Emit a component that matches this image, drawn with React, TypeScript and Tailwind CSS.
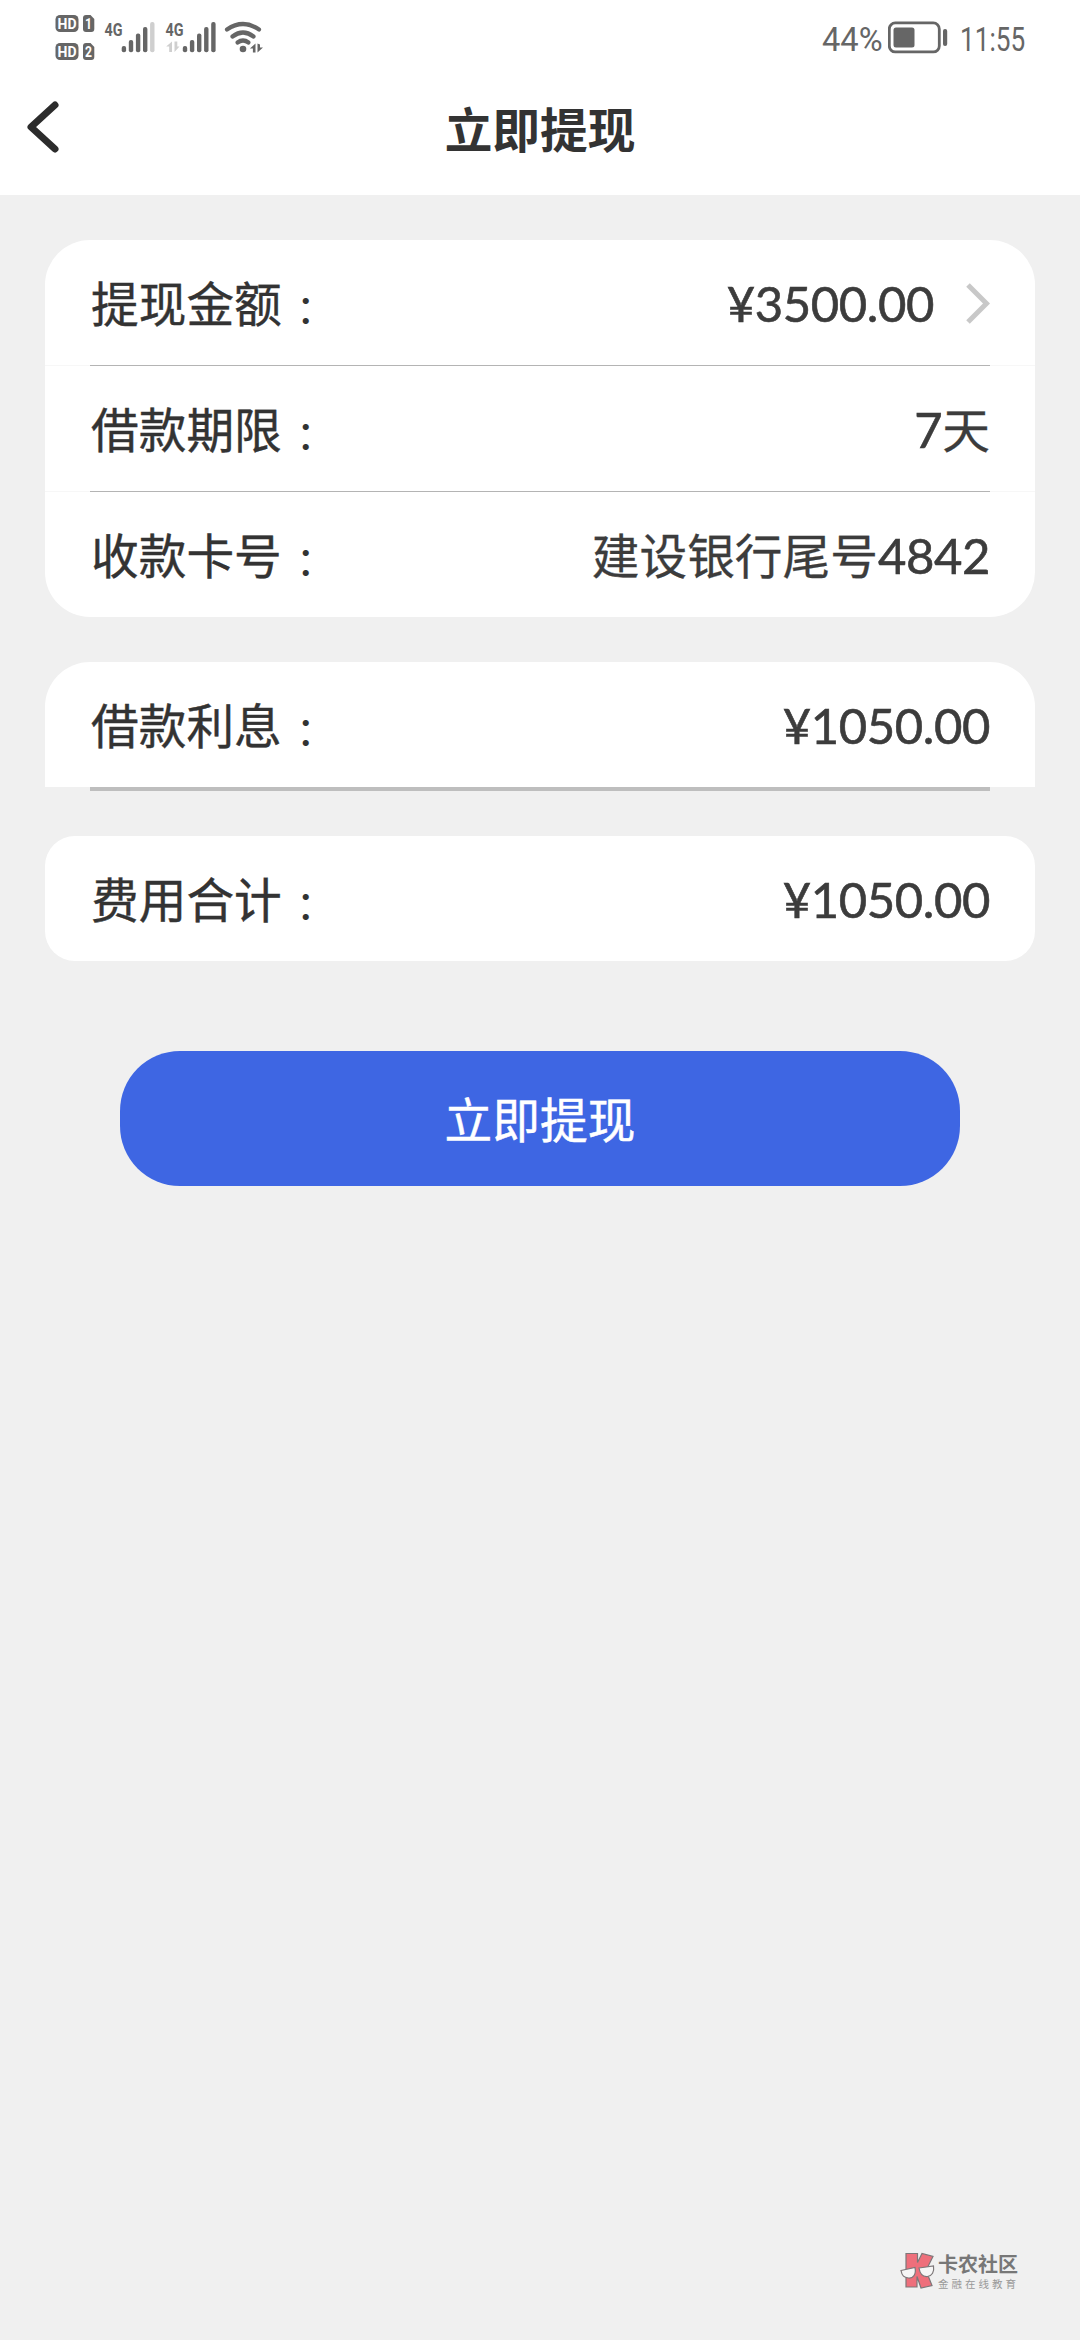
import type { ReactNode } from 'react';

interface RowProps {
  label: string;
  children: ReactNode;
}

function Row({ label, children }: RowProps) {
  return (
    <div className="flex h-[125px] items-center justify-between px-[45px] pb-0.5 text-[47.7px] leading-[70px] text-[#3c3c3c]">
      <div className="flex items-center pl-px text-[#333]">
        <span className="[-webkit-text-stroke:0.4px_#333]">{label}</span>
        <span className="mt-[14px] w-12 text-center font-['Noto_Sans_CJK_TC',sans-serif] text-[40px]">：</span>
      </div>
      <div className="flex items-center [-webkit-text-stroke:0.3px_#3c3c3c]">{children}</div>
    </div>
  );
}

function Num({ children }: { children: string }) {
  return (
    <span className="mt-[3px] font-['Lato',sans-serif] text-[49px] font-normal tracking-[-0.4px] [-webkit-text-stroke:0.6px_#3c3c3c]">
      {children}
    </span>
  );
}

function Divider() {
  return (
    <div className="h-px bg-[#f7f7f7] px-[45px]">
      <div className="h-px bg-[#b4b4b4]" />
    </div>
  );
}

function SignalBars({ x, weak }: { x: number; weak?: boolean }) {
  const tops = [46, 40, 33.5, 27, 22];
  return (
    <g>
      {tops.map((top, i) => (
        <rect
          key={top}
          x={x + i * 7.1}
          y={top}
          width={4.4}
          height={52.3 - top}
          rx={2}
          fill={weak && i === 4 ? '#cfcfcf' : '#666'}
        />
      ))}
    </g>
  );
}

function StatusBar() {
  return (
    <div className="flex h-[75px] items-start justify-between text-[#666]">
      <svg className="h-[75px] w-[280px]" viewBox="0 0 280 75" fill="#666" fontFamily="Roboto, sans-serif">
        {[15, 43].map((y, i) => (
          <g key={y}>
            <rect x="55.5" y={y} width="23" height="17" rx="4.5" />
            <text x="57.5" y={y + 13.8} fill="#fff" fontSize="15" fontWeight="700" textLength="19" lengthAdjust="spacingAndGlyphs">
              HD
            </text>
            <path d={`M86 ${y}h4.5l3.8 4v10a3 3 0 0 1-3 3h-5.300a3 3 0 0 1-3-3v-11a3 3 0 0 1 3-3z`} />
            <text x="85" y={y + 13.8} fill="#fff" fontSize="14" fontWeight="700" textLength="7" lengthAdjust="spacingAndGlyphs">
              {i + 1}
            </text>
          </g>
        ))}

        <text x="104.5" y="35.5" fontSize="19" fontWeight="700" textLength="18" lengthAdjust="spacingAndGlyphs">4G</text>
        <SignalBars x={121.7} weak />
        <text x="165.5" y="35.5" fontSize="19" fontWeight="700" textLength="18" lengthAdjust="spacingAndGlyphs">4G</text>
        <SignalBars x={182.8} />
        <path d="M172 41.5v10.5h-2.8v-5.5h-3z M174.500 41.500v10.500l5-5.500h-2.200v-5z" fill="#cfcfcf" />

        {/* wifi */}
        <g fill="none" stroke="#666" strokeWidth="4.2" strokeLinecap="round">
          <path d="M227 29.5Q243 18.5 259 29.5" />
          <path d="M232.5 36.5Q243 28.5 253.5 36.5" />
          <path d="M237.5 42.5Q243 38.5 248.5 42.5" />
        </g>
        <circle cx="243" cy="49" r="3.3" />
        <path d="M255.500 43.500v9h-2.600v-4h-3z M257.500 43.500v9l5.500-5h-3v-3z" />
      </svg>

      <div className="flex h-[75px] items-center pt-[3px] pr-[57px] font-['Roboto',sans-serif] text-[34px] leading-none">
        <span className="w-[60px] origin-left scale-x-[0.96] whitespace-nowrap">44%</span>
        <svg className="mb-[3px] ml-[6px] h-[75px] w-[60px]" viewBox="0 0 60 75">
          <rect x="1.3" y="22.900" width="50" height="29" rx="6" fill="none" stroke="#666" strokeWidth="2.8" />
          <rect x="5.5" y="27.5" width="21" height="20" rx="2.5" fill="#666" />
          <rect x="55" y="29" width="4.2" height="17" rx="2" fill="#666" />
        </svg>
        <span className="ml-3 w-[63px] origin-left scale-x-[0.77] whitespace-nowrap">11:55</span>
      </div>
    </div>
  );
}

function Watermark() {
  return (
    <div className="absolute top-[2251px] left-[900px] flex">
      <svg className="h-[40px] w-[36px]" viewBox="0 0 36 40" stroke="#7d7779" strokeWidth="1.2">
        <path d="M6 2.5h11.500v9L22 2.500l11 3-7 14 6 15-11 2.500-4-11.500v10.500H6z" fill="#ee6f7b" />
        <path d="M1 19.5l14-3c1.500 7-2 11-6.500 10.500S2 25 1 19.500z" fill="#f6f6f6" />
        <path d="M19 17l14.500-2c1 6-1.500 10-6 10.500S20 23 19 17z" fill="#f6f6f6" />
      </svg>
      <div className="pl-[2px] whitespace-nowrap">
        <div className="text-[20px] leading-[26px] font-bold text-[#777]">卡农社区</div>
        <div className="text-[10.5px] leading-[14px] tracking-[3px] text-[#999]">金融在线教育</div>
      </div>
    </div>
  );
}

function App() {
  return (
    <div className="relative h-[2340px] w-[1080px] overflow-hidden bg-[#f0f0f0] font-['Noto_Sans_CJK_SC',sans-serif]">
      <div className="h-[195px] bg-white">
        <StatusBar />
        <header className="flex h-[110px] items-center">
          <div className="flex-1">
            <svg className="mb-[7px] ml-[24px] h-[56px] w-[38px]" viewBox="0 0 38 56" fill="none" stroke="#2c2c2c" strokeWidth="7" strokeLinecap="round" strokeLinejoin="round">
              <path d="M31 6L7 28l24 22" />
            </svg>
          </div>
          <h1 className="pb-[5px] text-[47.7px] leading-[70px] font-bold text-[#333]">立即提现</h1>
          <div className="flex-1" />
        </header>
      </div>

      <main className="px-[45px] pt-[45px]">
        <section className="rounded-[45px] bg-white">
          <Row label="提现金额">
            <Num>¥3500.00</Num>
            <svg className="mt-[3px] ml-[30px] h-[44px] w-[26px]" viewBox="0 0 26 44" fill="none" stroke="#c8c8c8" strokeWidth="5">
              <path d="M4 4L22.500 22.500 4 41" />
            </svg>
          </Row>
          <Divider />
          <Row label="借款期限">
            <Num>7</Num>天
          </Row>
          <Divider />
          <Row label="收款卡号">
            建设银行尾号<Num>4842</Num>
          </Row>
        </section>

        <section className="mt-[45px]">
          <div className="rounded-t-[45px] bg-white">
            <Row label="借款利息">
              <Num>¥1050.00</Num>
            </Row>
          </div>
          <div className="mx-[45px] h-1 bg-[#bebebe]" />
        </section>

        <section className="mt-[45px] rounded-[30px] bg-white">
          <Row label="费用合计">
            <Num>¥1050.00</Num>
          </Row>
        </section>

        <button className="mx-[75px] mt-[90px] flex h-[135px] w-[840px] items-center justify-center rounded-[60px] bg-[#3e66e3] pb-px text-[47.7px] text-white [-webkit-text-stroke:0.5px_#fff]">
          立即提现
        </button>
      </main>

      <Watermark />
    </div>
  );
}

export default App;
